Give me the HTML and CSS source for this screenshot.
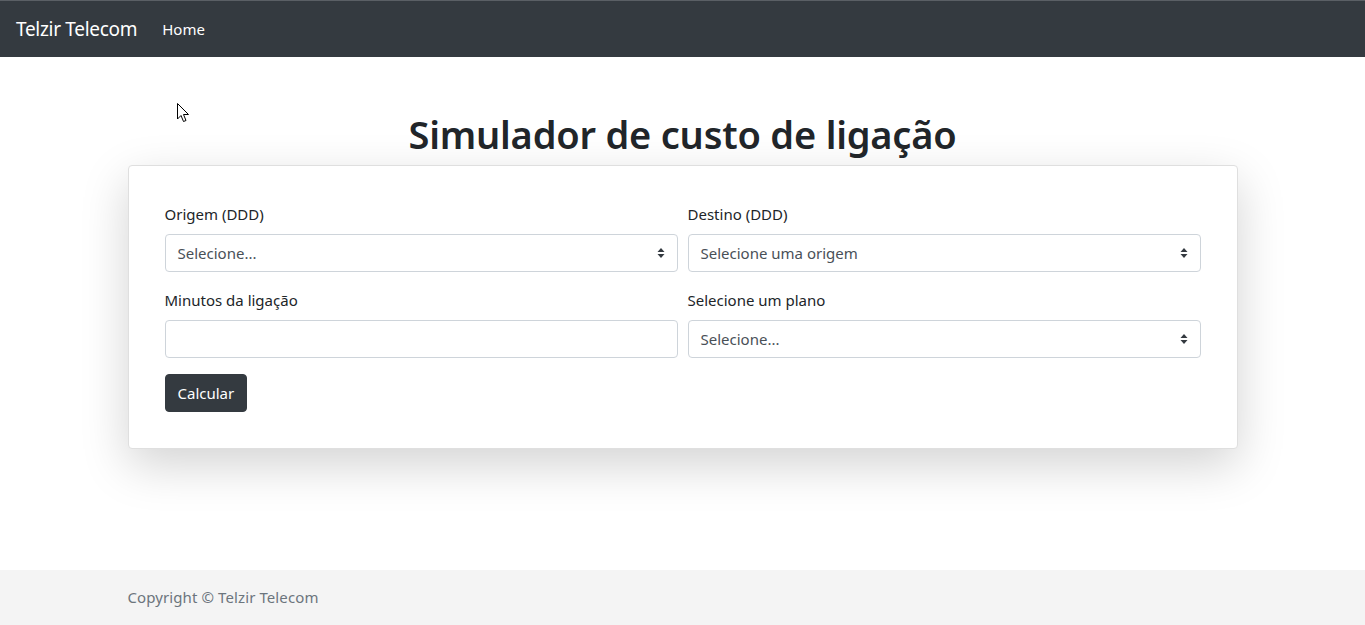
FILE: index.html
```html
<!DOCTYPE html>
<html lang="pt-BR">
<head>
<meta charset="utf-8">
<title>Telzir Telecom</title>
<link rel="stylesheet" href="styles.css">
</head>
<body>
<nav class="navbar">
  <a class="brand" href="#">Telzir Telecom</a>
  <a class="nav-link" href="#">Home</a>
</nav>
<main class="container">
  <h1 class="title">Simulador de custo de ligação</h1>
  <section class="card">
    <form class="form">
      <div class="field">
        <label class="label">Origem (DDD)</label>
        <div class="select"><span>Selecione...</span><svg class="caret" viewBox="0 0 8 12" width="8" height="12"><path d="M4 1 L7.5 5 H0.5 Z M4 11 L0.5 7 H7.5 Z" fill="#343a40"/></svg></div>
      </div>
      <div class="field">
        <label class="label">Destino (DDD)</label>
        <div class="select"><span>Selecione uma origem</span><svg class="caret" viewBox="0 0 8 12" width="8" height="12"><path d="M4 1 L7.5 5 H0.5 Z M4 11 L0.5 7 H7.5 Z" fill="#343a40"/></svg></div>
      </div>
      <div class="field">
        <label class="label">Minutos da ligação</label>
        <div class="input"></div>
      </div>
      <div class="field">
        <label class="label">Selecione um plano</label>
        <div class="select"><span>Selecione...</span><svg class="caret" viewBox="0 0 8 12" width="8" height="12"><path d="M4 1 L7.5 5 H0.5 Z M4 11 L0.5 7 H7.5 Z" fill="#343a40"/></svg></div>
      </div>
      <div class="actions">
        <button type="button" class="btn">Calcular</button>
      </div>
    </form>
  </section>
</main>
<footer class="footer">
  <div class="footer-inner">Copyright © Telzir Telecom</div>
</footer>
<svg class="cursor" width="12" height="20" viewBox="0 0 12 20"><path d="M0.5 0.5 V16 L4 12.5 L6.5 18.5 L9 17.5 L6.5 11.5 H11.5 Z" fill="#fff" stroke="#000" stroke-width="1"/></svg>
</body>
</html>
```
FILE: styles.css
```css
* { box-sizing: border-box; }
html, body { margin: 0; padding: 0; }
body {
  font-family: "Noto Sans", "Open Sans", sans-serif;
  font-size: 16px;
  line-height: 1.5;
  color: #212529;
  background: #fff;
  min-height: 625px;
  display: flex;
  flex-direction: column;
}
.navbar {
  height: 57px;
  background: #343a40;
  border-top: 1px solid #5a5f65;
  display: flex;
  align-items: center;
  padding: 0 16px;
}
.brand {
  color: #fff;
  text-decoration: none;
  font-size: 19px;
  margin-right: 25px;
  letter-spacing: -0.3px;
}
.nav-link {
  color: #fff;
  text-decoration: none;
  font-size: 15px;
}
.container {
  width: 1110px;
  margin: 0 auto;
  flex: 1;
}
.title {
  margin: 53px 0 7px;
  font-size: 38px;
  font-weight: 600;
  line-height: 48px;
  text-align: center;
  letter-spacing: -0.2px;
  color: #212529;
}
.card {
  border: 1px solid #dfdfdf;
  border-radius: 4px;
  background: #fff;
  box-shadow: 0 16px 48px rgba(0,0,0,0.175);
  padding: 36px;
}
.form {
  display: grid;
  grid-template-columns: 1fr 1fr;
  column-gap: 10px;
  row-gap: 16px;
}
.label {
  display: block;
  font-size: 15px;
  margin-bottom: 8px;
  line-height: 24px;
}
.select, .input {
  height: 38px;
  border: 1px solid #ced4da;
  border-radius: 4px;
  background: #fff;
  display: flex;
  align-items: center;
  justify-content: space-between;
  padding: 0 12px;
  color: #495057;
  font-size: 15px;
}
.caret { flex: none; }
.actions { grid-column: 1 / -1; }
.btn {
  height: 38px;
  padding: 0 12px;
  background: #343a40;
  color: #fff;
  border: 1px solid #343a40;
  border-radius: 4px;
  font-family: inherit;
  font-size: 15px;
}
.footer {
  height: 55px;
  background: #f4f4f4;
  display: flex;
  align-items: center;
}
.footer-inner {
  width: 1110px;
  margin: 0 auto;
  color: #6c757d;
  font-size: 15px;
  letter-spacing: 0.1px;
}
.cursor {
  position: absolute;
  left: 177px;
  top: 103px;
}
```
